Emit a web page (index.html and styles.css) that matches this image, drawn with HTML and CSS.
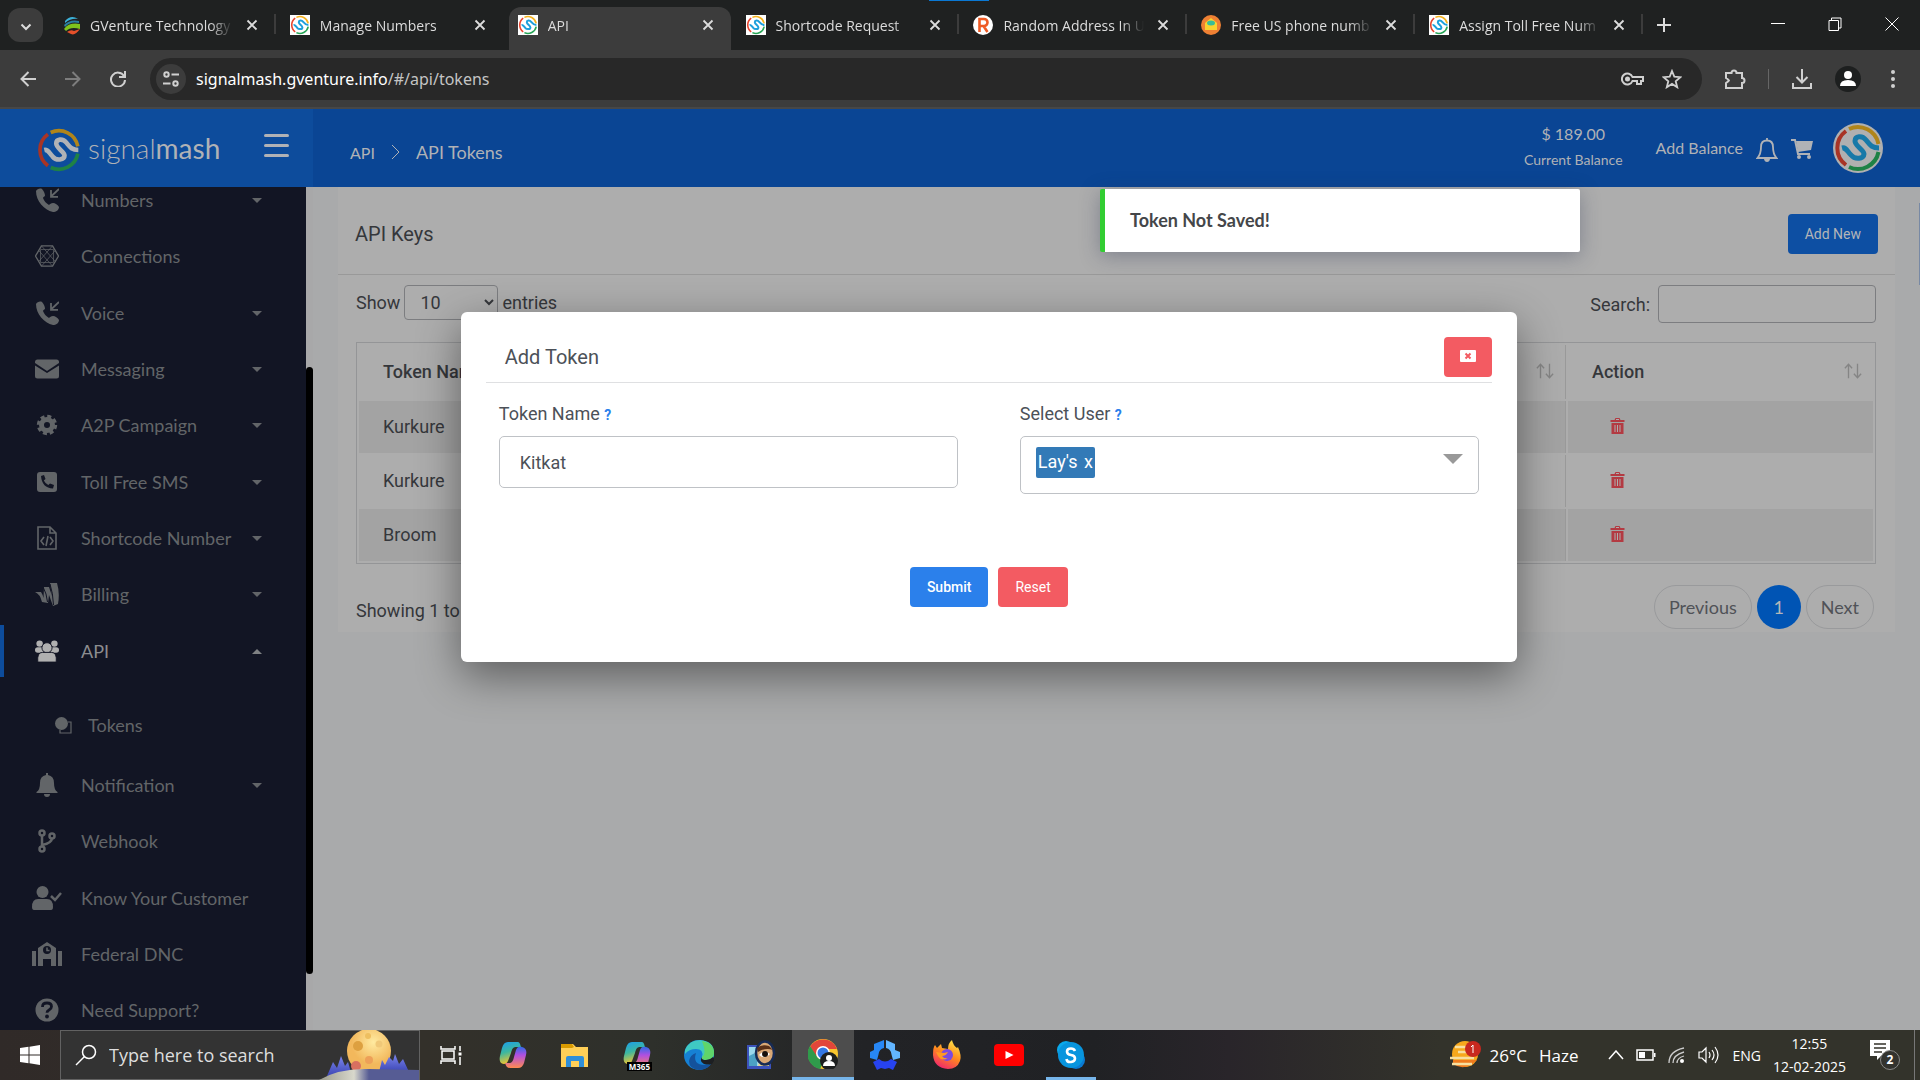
FILE: index.html
```html
<!DOCTYPE html>
<html lang="en">
<head>
<meta charset="utf-8">
<title>API</title>
<link rel="stylesheet" href="styles.css">
</head>
<body>
<svg class="defs" aria-hidden="true">
  <symbol id="rings" viewBox="0 0 50 50">
    <g fill="none" stroke-width="4">
      <path class="ring-red" d="M13 42A21 21 0 0 1 13 8"/>
      <path class="ring-yellow" d="M16 6A21 21 0 0 1 45.500 21"/>
      <path class="ring-green" d="M45.500 29A21 21 0 0 1 16 44"/>
      <path d="M9 25C13 24 14 28 18 32C22 37 31 36 31 31C31 27 22 23 22 18C22 13 29 12 33 17C37 22 39 25 46 25" stroke="currentColor" stroke-width="5"/>
    </g>
  </symbol>
  <symbol id="close" viewBox="0 0 12 12"><path d="M1.500 1.500l9 9M10.500 1.500l-9 9" stroke="currentColor" stroke-width="1.800"/></symbol>
  <symbol id="call" viewBox="0 0 24 24">
    <path fill="currentColor" d="M1 3C2 1 5 0 7 1C9 3 10 6 10 8C9 9 8 9 8 10C9 13 11 15 14 17C15 16 16 15 18 15C20 15 23 17 24 19C24 22 21 24 18 24C9 22 1 13 1 3z"/>
    <path d="M24 1l-8 7.500M16 2v6.800h7" fill="none" stroke="currentColor" stroke-width="1.800"/>
  </symbol>
  <symbol id="trash" viewBox="0 0 14 16">
    <path fill="currentColor" d="M0 2h4l1-2h4l1 2h4v2H0zM1 5h12v11H1z"/>
    <path d="M5.500 1.500h3M4.500 7v7M7 7v7M9.500 7v7" stroke="#adadad"/>
  </symbol>
  <symbol id="sort" viewBox="0 0 20 18"><path d="M5 17V2M1 6l4-4.500L9 6M15 1v15M11 12l4 4.500L19 12" fill="none" stroke="currentColor" stroke-width="1.500"/></symbol>
  <linearGradient id="cool" x2=".3" y2="1"><stop stop-color="#1a9df0"/><stop offset=".5" stop-color="#3cb7a0"/><stop offset="1" stop-color="#f5c52c"/></linearGradient>
  <linearGradient id="warm" x2="0" y2="1"><stop stop-color="#2d6be8"/><stop offset=".4" stop-color="#b04fe0"/><stop offset="1" stop-color="#ff8a50"/></linearGradient>
  <symbol id="copilot" viewBox="0 0 30 30">
    <path d="M10 2h9c3 0 3 2 4 5h-5c-3 0-4 2-5 6l-3 8c-1 2-2 3-4 3c-4 0-5-4-4-8l2-8c1-4 3-6 6-6z" fill="url(#cool)"/>
    <path d="M20 28h-8c-3 0-4-2-5-5h4c3 0 4-2 5-6l2-7c1-3 3-4 6-3c4 1 5 4 4 8l-2 8c-1 3-3 5-6 5z" fill="url(#warm)"/>
  </symbol>
</svg>

<div class="tabstrip">
  <button class="tab-search" aria-label="Search tabs"><svg width="12" height="8" viewBox="0 0 12 8"><path d="M1.500 1.500L6 6l4.500-4.500" fill="none" stroke="currentColor" stroke-width="2"/></svg></button>
  <div class="tabs">
    <div class="tab"><svg class="favicon" viewBox="0 0 20 20"><path d="M3 6Q9-1 16 4Q9 3 3 8z" fill="#3cb1d8"/><path d="M2 10Q8 4 17 6v2Q8 6 3 12z" fill="#2a7fa0"/><path d="M2 14Q7 7 18 9v5Q9 11 4 16z" fill="#7fc31c"/><path d="M5 17Q9 14 12 16l6-2Q13 21 9 19z" fill="#e5502a"/></svg><span class="title">GVenture Technology</span><button class="close" aria-label="Close tab"><svg><use href="#close"/></svg></button></div>
    <div class="tab"><svg class="favicon white"><use href="#rings"/></svg><span class="title">Manage Numbers</span><button class="close" aria-label="Close tab"><svg><use href="#close"/></svg></button></div>
    <div class="tab active"><svg class="favicon white"><use href="#rings"/></svg><span class="title">API</span><button class="close" aria-label="Close tab"><svg><use href="#close"/></svg></button></div>
    <div class="tab"><svg class="favicon white"><use href="#rings"/></svg><span class="title">Shortcode Request</span><button class="close" aria-label="Close tab"><svg><use href="#close"/></svg></button></div>
    <div class="tab"><svg class="favicon" viewBox="0 0 20 20"><circle cx="10" cy="10" r="10" fill="#fff"/><path d="M6.500 17V4H11a3.500 3.500 0 0 1 0 7H7M10.500 11l4 6" fill="none" stroke="#ee5a24" stroke-width="2.600"/></svg><span class="title">Random Address In U</span><button class="close" aria-label="Close tab"><svg><use href="#close"/></svg></button></div>
    <div class="tab"><svg class="favicon" viewBox="0 0 20 20"><circle cx="10" cy="10" r="10" fill="#ee8033"/><path d="M4 8l6-5 6 5v7H4z" fill="#f9d22e"/><ellipse cx="10" cy="8" rx="4" ry="2.500" fill="#38bd98"/></svg><span class="title">Free US phone numb</span><button class="close" aria-label="Close tab"><svg><use href="#close"/></svg></button></div>
    <div class="tab"><svg class="favicon white"><use href="#rings"/></svg><span class="title">Assign Toll Free Num</span><button class="close" aria-label="Close tab"><svg><use href="#close"/></svg></button></div>
  </div>
  <button class="new-tab" aria-label="New tab"><svg width="14" height="14" viewBox="0 0 14 14"><path d="M7 0v14M0 7h14" stroke="currentColor" stroke-width="2"/></svg></button>
  <div class="window-buttons">
    <button aria-label="Minimize"><svg viewBox="0 0 14 14"><path d="M0 6.500h14" stroke="#fff"/></svg></button>
    <button aria-label="Restore"><svg viewBox="0 0 14 14"><path d="M1 3.500h9.500v10H1zM3.500 3V1h9.500v10h-2" fill="none" stroke="#fff"/></svg></button>
    <button aria-label="Close"><svg viewBox="0 0 14 14"><path d="M.5.500l13 13M13.500.500l-13 13" stroke="#fff"/></svg></button>
  </div>
  <div class="loading"></div>
</div>

<div class="toolbar">
  <div class="nav-buttons">
    <button aria-label="Back"><svg viewBox="0 0 16 16"><path d="M16 8H2M8.500 1L1.500 8l7 7" fill="none" stroke="currentColor" stroke-width="2"/></svg></button>
    <button class="off" aria-label="Forward"><svg viewBox="0 0 16 16"><path d="M0 8h14M7.500 1l7 7-7 7" fill="none" stroke="currentColor" stroke-width="2"/></svg></button>
    <button aria-label="Reload"><svg viewBox="0 0 16 16"><path d="M14 5A7 7 0 1 0 15 9M15 0v6H9" fill="none" stroke="currentColor" stroke-width="2"/></svg></button>
  </div>
  <div class="omnibox">
    <span class="site-info"><svg width="16" height="16" viewBox="0 0 16 16" fill="none" stroke="currentColor" stroke-width="2"><circle cx="3.500" cy="3.500" r="2.200"/><path d="M8.500 3.500H16M0 12.500h7.500"/><circle cx="12.500" cy="12.500" r="2.200"/></svg></span>
    <span class="url">signalmash.gventure.info<span>/#/api/tokens</span></span>
    <svg width="23" height="14" viewBox="0 0 23 14" fill="none" stroke="currentColor" stroke-width="2"><path d="M11.500 5A5.500 5.500 0 1 0 11.500 9H16v3h4V9h2V5z"/><circle cx="6.500" cy="7" r="1.500" fill="currentColor"/></svg>
    <svg width="20" height="20" viewBox="0 0 20 20"><path d="M10 2l2.300 5.700 6 .5-4.600 4 1.500 6L10 14.900l-5.200 3.300 1.500-6-4.600-4 6-.5z" fill="none" stroke="currentColor" stroke-width="1.800"/></svg>
  </div>
  <div class="actions">
    <svg width="22" height="22" viewBox="0 0 22 22"><path d="M2 5h5.500a2.500 2.500 0 0 1 5 0H18v5a2.500 2.500 0 0 1 0 5v5H2v-5q3-2 3-2.500T2 10z" fill="none" stroke="currentColor" stroke-width="2"/></svg>
    <i></i>
    <svg width="22" height="22" viewBox="0 0 22 22"><path d="M11 1v13M5.500 9l5.500 5.500L16.500 9M2 15v5h18v-5" fill="none" stroke="currentColor" stroke-width="2"/></svg>
    <svg width="26" height="26" viewBox="0 0 26 26"><circle cx="13" cy="13" r="13" fill="#1d1f1f"/><circle cx="13" cy="9" r="4" fill="#fff"/><path d="M5 20q0-6 8-6t8 6z" fill="#fff"/></svg>
    <svg width="6" height="20" viewBox="0 0 6 20" fill="currentColor"><circle cx="3" cy="3" r="2"/><circle cx="3" cy="10" r="2"/><circle cx="3" cy="17" r="2"/></svg>
  </div>
</div>

<div class="page">
  <header class="header">
    <div class="brand">
      <svg class="brand-mark"><use href="#rings"/></svg>
      <span class="brand-name">signal<b>mash</b></span>
      <button class="menu" aria-label="Toggle menu"><i></i><i></i><i></i></button>
    </div>
    <nav class="crumbs"><a href="#">API</a><svg width="9" height="16" viewBox="0 0 9 16"><path d="M1 1l7 7-7 7" fill="none" stroke="currentColor"/></svg><a href="#" class="current">API Tokens</a></nav>
    <div class="account">
      <div class="balance"><span>$ 189.00</span><small>Current Balance</small></div>
      <a href="#" class="add-balance">Add Balance</a>
      <svg class="bell" width="22" height="26" viewBox="0 0 22 26"><path d="M11 1v2M1.500 21Q5 17 5 10Q5 3.500 11 3.500T17 10Q17 17 20.500 21z" fill="none" stroke="currentColor" stroke-width="1.800"/><path d="M8 22h6q-.5 3-3 3t-3-3z" fill="currentColor"/></svg>
      <svg class="cart" width="22" height="20" viewBox="0 0 22 20"><path d="M0 1h4l3 14h12" fill="none" stroke="currentColor" stroke-width="2"/><path d="M5 2h17l-2 9L7 13z" fill="currentColor"/><circle cx="8" cy="18" r="2" fill="currentColor"/><circle cx="18" cy="18" r="2" fill="currentColor"/></svg>
      <svg class="avatar"><use href="#rings"/></svg>
    </div>
  </header>

  <div class="body">
    <nav class="sidebar">
      <ul>
        <li><a href="#"><svg><use href="#call"/></svg>Numbers<i></i></a></li>
        <li><a href="#"><svg viewBox="0 0 26 24" fill="none" stroke="currentColor"><path d="M7 1h12l6.500 11L19 23H7L.5 12z" stroke-width="1.500"/><path d="M7 1l15 17M19 1L4 18M7 23L22 6M19 23L4 6M6 5h14M6 19h14M6 5v14M20 5v14" stroke-width=".8"/></svg>Connections</a></li>
        <li><a href="#"><svg><use href="#call"/></svg>Voice<i></i></a></li>
        <li><a href="#"><svg viewBox="0 0 24 24" fill="currentColor"><path d="M0 5q0-2.500 2.500-2.500h19Q24 2.500 24 5v1l-12 8L0 6z"/><path d="M0 8.500l12 7.500 12-7.500V19q0 2.500-2.500 2.500h-19Q0 21.500 0 19z"/></svg>Messaging<i></i></a></li>
        <li><a href="#"><svg viewBox="0 0 24 24" fill="none" stroke="currentColor"><circle cx="12" cy="12" r="5.500" stroke-width="5"/><circle cx="12" cy="12" r="8.700" stroke-width="3" stroke-dasharray="4 2.830"/></svg>A2P Campaign<i></i></a></li>
        <li><a href="#"><svg viewBox="0 0 24 24"><rect x="2" y="2" width="20" height="20" rx="3" fill="currentColor"/><path d="M6 6l3-1 1.500 4-1.700 1.500q1.500 3 4.500 4.500L15 13.500l4 1.500-1 3.500Q7 18 6 6z" fill="#121524"/></svg>Toll Free SMS<i></i></a></li>
        <li><a href="#"><svg viewBox="0 0 24 24" fill="none" stroke="currentColor" stroke-width="1.600"><path d="M3 1h12l6 6v16H3zM15 1v6h6M9 11l-3 4 3 4M15 11l3 4-3 4M13 10l-2 10"/></svg>Shortcode Number<i></i></a></li>
        <li><a href="#"><svg viewBox="0 0 24 24" fill="currentColor"><path d="M0 10h6q2 3 2.500 6L9 5h5l3 9L15 1h7q3 10 1 21l-5 2-4-11-1 8-6-1Q5 12 0 10z"/><path d="M8.500 6q3 5 4 14M15 2q3 9 3.500 21" stroke="#121524" fill="none"/></svg>Billing<i></i></a></li>
        <li class="open"><a href="#"><svg viewBox="0 0 26 24" fill="currentColor"><circle cx="5" cy="4" r="3.500"/><circle cx="21" cy="4" r="3.500"/><rect y="8" width="10" height="6" rx="3"/><rect x="16" y="8" width="10" height="6" rx="3"/><g stroke="#121524"><circle cx="13" cy="8.500" r="5.500"/><path d="M3 24Q2 13.500 8 13.500h10q6 0 5 10.500z"/></g></svg>API<i class="up"></i></a>
          <div class="sub"><a href="#"><svg viewBox="0 0 17 17"><circle cx="6.500" cy="6.500" r="6.500" fill="currentColor"/><path d="M13 5h3v11H5v-3" fill="none" stroke="currentColor" stroke-width="1.200"/></svg>Tokens</a></div></li>
        <li><a href="#"><svg viewBox="0 0 24 24" fill="currentColor"><path d="M11 0h2v2q6 1 6 8t3.500 9v1h-21v-1Q5 17 5 10t6-8zM9 21h6q0 3-3 3t-3-3z"/></svg>Notification<i></i></a></li>
        <li><a href="#"><svg viewBox="0 0 24 24" fill="none" stroke="currentColor" stroke-width="2.500"><circle cx="7" cy="4" r="2.500"/><circle cx="17" cy="7" r="2.500"/><circle cx="7" cy="20" r="2.500"/><path d="M7 6v12M17 9q0 5-10 7"/></svg>Webhook</a></li>
        <li><a href="#"><svg class="wide" viewBox="0 0 30 24"><circle cx="10.500" cy="6" r="6" fill="currentColor"/><path d="M0 21q0-8 6-8h9q6 0 6 8 0 3-2 3H2q-2 0-2-3z" fill="currentColor"/><path d="M19 10l4 4 6-7" fill="none" stroke="currentColor" stroke-width="2.500"/></svg>Know Your Customer</a></li>
        <li><a href="#"><svg class="wide" viewBox="0 0 30 24"><path d="M0 9h4v15H0zM26 9h4v15h-4zM6 6l9-6 9 6v18h-5v-7h-8v7H6z" fill="currentColor"/><circle cx="15" cy="8" r="4" fill="#121524"/><path d="M15 5.500V8.500h2.500" fill="none" stroke="currentColor" stroke-width="1.500"/></svg>Federal DNC</a></li>
        <li><a href="#"><svg viewBox="0 0 24 24"><circle cx="12" cy="12" r="11.500" fill="currentColor"/><path d="M7.500 9q0-4 4.500-4t4.500 3.500q0 2-2.500 3.500-2 1-2 2.800" fill="none" stroke="#121524" stroke-width="2.800"/><circle cx="12" cy="18.500" r="1.900" fill="#121524"/></svg>Need Support?</a></li>
      </ul>
    </nav>
    <div class="scroll"><div></div></div>

    <main>
      <section class="card">
        <div class="card-head"><h1>API Keys</h1><button class="btn dim">Add New</button></div>
        <div class="filters">
          <label>Show <select><option>10</option></select> entries</label>
          <label>Search: <input type="search"></label>
        </div>
        <table>
          <colgroup><col class="c-name"><col><col class="c-action"></colgroup>
          <thead><tr><th>Token Name</th><th><svg class="sort"><use href="#sort"/></svg></th><th>Action<svg class="sort"><use href="#sort"/></svg></th></tr></thead>
          <tbody>
            <tr><td>Kurkure</td><td></td><td><button class="delete" aria-label="Delete"><svg><use href="#trash"/></svg></button></td></tr>
            <tr><td>Kurkure</td><td></td><td><button class="delete" aria-label="Delete"><svg><use href="#trash"/></svg></button></td></tr>
            <tr><td>Broom</td><td></td><td><button class="delete" aria-label="Delete"><svg><use href="#trash"/></svg></button></td></tr>
          </tbody>
        </table>
        <div class="table-foot">
          <span>Showing 1 to 3</span>
          <div class="pager"><button>Previous</button><button class="on">1</button><button>Next</button></div>
        </div>
      </section>
    </main>
  </div>

  <div class="edge"></div>

  <form class="modal" role="dialog" aria-labelledby="modal-title">
    <div class="modal-head">
      <h2 id="modal-title">Add Token</h2>
      <button type="button" class="btn red square" aria-label="Close"><svg width="16" height="12" viewBox="0 0 16 12"><rect width="16" height="12" rx="1" fill="#fff"/><path d="M5.500 3.500l5 5M10.500 3.500l-5 5" stroke="#f35b62" stroke-width="2"/></svg></button>
    </div>
    <div class="fields">
      <div><label for="token">Token Name <b>?</b></label><input id="token" value="Kitkat"></div>
      <div><label for="user">Select User <b>?</b></label><button type="button" id="user" class="picker"><span class="chip">Lay's <span>x</span></span><i></i></button></div>
    </div>
    <div class="modal-actions"><button type="button" class="btn">Submit</button><button type="reset" class="btn red">Reset</button></div>
  </form>

  <div class="toast" role="status">Token Not Saved!</div>
</div>

<div class="taskbar">
  <button class="start" aria-label="Start"><svg width="20" height="20" viewBox="0 0 20 20" fill="#fff"><path d="M0 3l8.500-1.200v7.700H0zM9.500 1.700L20 0v9.500H9.500zM0 10.500h8.500v7.700L0 17zM9.500 10.500H20V20L9.500 18.300z"/></svg></button>
  <div class="search">
    <svg width="22" height="22" viewBox="0 0 22 22"><circle cx="14" cy="8" r="6.500" fill="none" stroke="#fff" stroke-width="1.500"/><path d="M9.500 12.500L1 21" stroke="#fff" stroke-width="1.500"/></svg>
    <input aria-label="Search" placeholder="Type here to search">
    <svg class="moon" width="100" height="50" viewBox="0 0 100 50">
      <defs><radialGradient id="moon" cx=".6" cy=".3"><stop stop-color="#ffeaa0"/><stop offset="1" stop-color="#f2b85c"/></radialGradient><linearGradient id="tree" x2="0" y2="1"><stop stop-color="#7c86ee"/><stop offset="1" stop-color="#3c46b4"/></linearGradient><linearGradient id="hill"><stop stop-color="#9a9a8c"/><stop offset=".35" stop-color="#d8d8cc"/><stop offset=".5" stop-color="#565c94"/></linearGradient></defs>
      <circle cx="50" cy="21" r="22" fill="url(#moon)"/><circle cx="39" cy="16" r="5" fill="#dda040"/><circle cx="60" cy="14" r="3.500" fill="#f0c878"/><circle cx="50" cy="30" r="4" fill="#eda058"/><circle cx="49" cy="6" r="3" fill="#eebf60"/><circle cx="37" cy="36" r="5" fill="#d87060"/>
      <path d="M8 46l6-14 4 6 4-12 4 10 3-4 4 14z" fill="url(#tree)"/><path d="M60 42l3-12 3 5 4-8 4 4 2-7 4 10 4-5 6 13z" fill="url(#tree)"/>
      <path d="M0 50Q20 38 50 39l50 1v10z" fill="url(#hill)"/>
    </svg>
  </div>
  <div class="apps">
    <button aria-label="Task view"><svg viewBox="0 0 30 30" fill="none" stroke="#fff" stroke-width="1.500"><path d="M5 6v3h14V6M5 24v-3h14v3M6 11h12v8H6zM24 6v5M24 17v8"/><path d="M22.500 14h3" stroke-width="3"/></svg></button>
    <button aria-label="Copilot"><svg><use href="#copilot"/></svg></button>
    <button aria-label="Files"><svg viewBox="0 0 30 30"><path d="M1 4h12l3 3h12v20H1z" fill="#ffcf57"/><path d="M1 4h11l2 3-2 1H1z" fill="#d99a00"/><path d="M6 27V18q0-2 2-2h14q2 0 2 2v9h-5v-6h-8v6z" fill="#2f8ed8"/></svg></button>
    <button aria-label="M365" class="m365"><svg><use href="#copilot"/></svg><span>M365</span></button>
    <button aria-label="Edge"><svg viewBox="0 0 30 30"><circle cx="15" cy="15" r="15" fill="#1681d4"/><path d="M1 10Q5 0 16 0q14 1 14 13 0 7-8 7-5 0-4-3Q20 9 12 9 5 9 1 14z" fill="#3fc9c3"/><path d="M18 1q12 2 12 12 0 7-8 7-5 0-4-3 5-3 0-16z" fill="#5fd56a"/><path d="M12 13q-4 12 9 12 4 0 7-2-5 7-13 7-10-1-10-9 1-6 7-8z" fill="#14529c"/><path d="M18 17q-1 3 4 3 4 0 7-3l2 2-3 5q-4 1-8 0-5-2-2-7z" fill="#1d1f22"/></svg></button>
    <button aria-label="Photo viewer"><svg viewBox="0 0 30 30"><path d="M1 5h24v24H1z" fill="#3c52bb"/><path d="M3 7h20v19H3z" fill="#9bd8ec"/><path d="M3 16l8-4v14H3z" fill="#4ca1c4"/><path d="M12 26l3-12 8 6v6z" fill="#e5d08c"/><ellipse cx="19" cy="13" rx="9" ry="11.500" fill="#d9a876" stroke="#172b55" stroke-width="2.500"/><path d="M11 8q5-4 12-2l4 4q-7-3-15 2z" fill="#5a3018"/><path d="M13 15q5-6 11-1-5 6-11 1z" fill="#fff"/><circle cx="19" cy="14" r="3" fill="#17100c"/></svg></button>
    <button aria-label="Chrome" class="current"><svg viewBox="0 0 30 30"><circle cx="15" cy="15" r="15" fill="#f9c62e"/><path d="M2 8a15 15 0 0 1 27 2H15l-6 9z" fill="#e2463a"/><path d="M2 7l8 12 6 3-4 8A15 15 0 0 1 2 7z" fill="#2f9b4b"/><circle cx="15" cy="14" r="7" fill="#fff"/><circle cx="15" cy="14" r="5.500" fill="#3578e5"/><circle cx="21" cy="22" r="9" fill="#1d1f1f"/><circle cx="21" cy="19" r="3" fill="#fff"/><path d="M15 27q0-5 6-5t6 5z" fill="#fff"/></svg></button>
    <button aria-label="Meetings"><svg viewBox="0 0 30 30"><path d="M14 0v8q-5 1-5.500 6.500L7 20l-7-2v-6l4-2V4z" fill="#2787f5"/><path d="M16 0l9 4v6l5 2v6l-7 2-1.500-5.500Q21 9 16 8z" fill="#62b5ff"/><path d="M3 22l6-3q6 5 12 0l6 3-4 8-4-2-4 1-4-1-4 2z" fill="#2743f0"/></svg></button>
    <button aria-label="Firefox"><svg viewBox="0 0 30 30"><defs><linearGradient id="fox" x1=".8" x2=".3" y2="1"><stop stop-color="#ffe94a"/><stop offset=".5" stop-color="#ff8a1e"/><stop offset="1" stop-color="#f0246e"/></linearGradient></defs><path d="M1 15Q1 7 3 5l2 3 4-4 1 4 6 1q0-6 4-9 1 5 5 8l1-1q4 9 2 14-3 8-12 8Q2 28 1 15z" fill="url(#fox)"/><circle cx="15" cy="15" r="6" fill="#7a4ae0"/><path d="M4 12l8 1 4-1q-2 4-6 4 2 3 6 2-6 4-10-2z" fill="#ff9a22"/></svg></button>
    <button aria-label="YouTube"><svg viewBox="0 0 30 30"><rect y="4" width="30" height="22" rx="4" fill="#f00"/><path d="M11.500 11l8 4-8 4z" fill="#fff"/></svg></button>
    <button aria-label="Skype" class="running"><svg viewBox="0 0 30 30"><circle cx="10" cy="10" r="9" fill="#0aa9ec"/><circle cx="20" cy="20" r="9" fill="#0a7ad2"/><circle cx="15" cy="15" r="13" fill="#0895de"/><path d="M19 11q-1-2.500-4-2.500-4 0-4 3t4 3.500 4 3.500-4 3.500-4.500-3" fill="none" stroke="#fff" stroke-width="2.600"/></svg></button>
  </div>
  <div class="tray">
    <svg class="weather" width="32" height="30" viewBox="0 0 32 30"><circle cx="15" cy="14" r="13" fill="#f7a81c"/><path d="M3 24q12 8 24-4H3z" fill="#ef7a1d"/><path d="M5 7h12M8 12h12M0 18h24M2 24h20" stroke="#f7dfa0" stroke-width="2.500"/><circle cx="23" cy="9" r="8" fill="#c8281f"/><path d="M21 7l2-2v8" fill="none" stroke="#fff"/></svg>
    <span class="big">26°C</span><span class="big haze">Haze</span>
    <svg width="16" height="10" viewBox="0 0 16 10"><path d="M1 9l7-8 7 8" fill="none" stroke="#fff" stroke-width="1.500"/></svg>
    <svg width="20" height="12" viewBox="0 0 20 12"><path d="M1 1h16v10H1z" fill="none" stroke="#fff" stroke-width="1.500"/><path d="M3 3h6v6H3zM18 4h1.500v4H18z" fill="#fff"/></svg>
    <svg width="18" height="18" viewBox="0 0 18 18" fill="none" stroke="#ccc" stroke-width="1.300"><path d="M1 17Q1 5 16 2M5 17Q5 9 16 6M9 17Q9 12 16 10"/><circle cx="14" cy="15" r="2" fill="#fff" stroke="none"/></svg>
    <svg width="22" height="18" viewBox="0 0 22 18" fill="none" stroke="#fff" stroke-width="1.200"><path d="M1 6h3l4-4v14l-4-4H1zM11 6q2 3 0 6M14 4q4 5 0 10M17 1q6 8 0 16"/></svg>
    <span class="lang">ENG</span>
    <div class="clock"><span>12:55</span><span>12-02-2025</span></div>
    <div class="notices"><svg width="20" height="20" viewBox="0 0 20 20"><path d="M0 0h20v16h-9l-4 4v-4H0z" fill="#fff"/><path d="M4 4h12M4 8h12M4 12h8" stroke="#33322a" stroke-width="1.500"/></svg><b>2</b></div>
    <i class="peek"></i>
  </div>
</div>
</body>
</html>
```
FILE: styles.css
```css
* { box-sizing: border-box; }
body {
  margin: 0;
  height: 100vh;
  display: flex;
  flex-direction: column;
  overflow: hidden;
  font-family: "Roboto", "Liberation Sans", sans-serif;
  font-size: 18px;
  color: #35373b;
}
button {
  font: inherit;
  color: inherit;
  border: 0;
  padding: 0;
  background: none;
}
a { color: inherit; text-decoration: none; }
h1, h2 { margin: 0; font-size: 20px; font-weight: 400; }
svg { flex: none; }
.defs { position: absolute; width: 0; height: 0; }
.ring-red { stroke: var(--red, #e8452f); }
.ring-yellow { stroke: var(--yellow, #f5b21c); }
.ring-green { stroke: var(--green, #26a556); }

/* Browser tabs */
.tabstrip {
  position: relative;
  height: 50px;
  flex: none;
  display: flex;
  align-items: center;
  padding: 0 0 0 8px;
  background: #1f2121;
  color: #dcdcdc;
  font-family: "Open Sans", sans-serif;
  font-size: 14px;
}
.tab-search {
  width: 35px;
  height: 34px;
  border-radius: 12px;
  background: #3c3c3c;
}
.tabs { flex: 1; height: 50px; display: flex; margin-left: 5px; }
.tab {
  position: relative;
  flex: 1 1 0;
  min-width: 0;
  display: flex;
  align-items: center;
  padding: 0 18px 0 14px;
}
.tab::after {
  content: "";
  position: absolute;
  right: 0;
  top: 14px;
  width: 2px;
  height: 20px;
  background: #3c3c3c;
}
.tab.active::after, .tab:nth-child(2)::after { display: none; }
.tab.active::before {
  content: "";
  position: absolute;
  inset: 7px 1px 0 5px;
  border-radius: 12px 12px 0 0;
  background: #3c3c3c;
}
.tab.active > * { position: relative; }
.favicon { width: 20px; height: 20px; margin-right: 10px; }
.tab:first-child .favicon { margin-right: 8px; }
.favicon.white { background: #fff; color: #1ea0dc; }
.title {
  flex: 1;
  overflow: hidden;
  white-space: nowrap;
  margin-right: 10px;
  -webkit-mask-image: linear-gradient(90deg, #000 82%, transparent 98%);
  mask-image: linear-gradient(90deg, #000 82%, transparent 98%);
}
.close { display: flex; }
.close svg { width: 12px; height: 12px; }
.new-tab { margin-left: 14px; display: flex; }
.window-buttons { display: flex; margin-left: 78px; }
.window-buttons button { width: 57px; height: 50px; }
.window-buttons svg { width: 14px; height: 14px; }
.loading {
  position: absolute;
  left: 929px;
  top: 0;
  width: 60px;
  height: 1px;
  background: #0a78d4;
}

/* Address bar */
.toolbar {
  height: 59px;
  flex: none;
  display: flex;
  align-items: center;
  padding: 0 24px 0 20px;
  background: #3c3c3c;
  border-bottom: 2px solid #474747;
  color: #d0d0d0;
}
.nav-buttons { display: flex; gap: 29px; width: 130px; }
.nav-buttons button { display: flex; }
.nav-buttons svg { width: 16px; height: 16px; }
.nav-buttons .off { color: #7d7d7d; }
.omnibox {
  flex: 1;
  height: 42px;
  display: flex;
  align-items: center;
  gap: 18px;
  padding: 0 20px 0 6px;
  border-radius: 21px;
  background: #282828;
}
.site-info {
  width: 30px;
  height: 30px;
  display: grid;
  place-items: center;
  border-radius: 50%;
  background: #3c3c3c;
}
.url {
  flex: 1;
  margin-left: -8px;
  font-family: "Noto Sans", sans-serif;
  font-size: 16px;
  color: #fff;
}
.url span { color: #c4c4c4; }
.actions { display: flex; align-items: center; gap: 22px; margin-left: 22px; }
.actions i { width: 1px; height: 20px; background: #666; }
.actions svg:last-child { margin-left: 7px; }

/* Application header */
.page {
  --red: #a83425;
  --yellow: #b0851a;
  --green: #1f8245;
  position: relative;
  flex: 1;
  min-height: 0;
  display: flex;
  flex-direction: column;
  background: #a9aaab;
}
.header {
  height: 78px;
  flex: none;
  display: flex;
  align-items: center;
  background: #0a4594;
  color: #b0b2b6;
  font-family: "Lato", sans-serif;
}
.brand {
  width: 313px;
  height: 78px;
  display: flex;
  align-items: center;
  padding: 0 24px 0 36px;
  background: #0d4c9c;
}
.brand-mark { width: 46px; height: 46px; margin-top: 4px; }
.brand-name { margin-left: 6px; font-size: 28px; line-height: 34px; font-weight: 300; }
.menu { margin: 0 0 6px auto; display: flex; flex-direction: column; gap: 7px; }
.menu i { width: 25px; height: 3px; border-radius: 2px; background: currentColor; }
.crumbs {
  display: flex;
  align-items: center;
  gap: 16px;
  margin: 8px auto 0 37px;
  font-size: 16px;
}
.crumbs .current { font-size: 18px; }
.account { display: flex; align-items: center; padding-right: 37px; font-size: 16px; }
.balance { display: flex; flex-direction: column; align-items: center; gap: 8px; margin-bottom: 4px; }
.balance small { font-size: 14px; }
.add-balance { margin: 0 13px 2px 33px; }
.bell { margin-top: 4px; }
.cart { margin: 2px 20px 0 13px; }
.avatar { width: 50px; height: 50px; border-radius: 50%; background: #b0b0b0; color: #1779a8; }

/* Sidebar */
.body { flex: 1; min-height: 0; display: flex; }
.sidebar {
  width: 306px;
  overflow: hidden;
  background: #121524;
  color: #626568;
  font-family: "Lato", sans-serif;
}
.sidebar ul { list-style: none; margin: -15px 0 0; padding: 0; }
.sidebar li:nth-child(3n + 2) { padding-bottom: 1px; }
.sidebar li > a {
  height: 56px;
  display: flex;
  align-items: center;
  padding: 0 44px 0 35px;
}
.sidebar li > a > svg { width: 24px; height: 24px; margin-right: 22px; }
.sidebar li > a > svg.wide { width: 30px; margin: 0 19px 0 -3px; }
.sidebar i {
  margin-left: auto;
  border: 5px solid transparent;
  border-top-color: currentColor;
  border-bottom: 0;
}
.sidebar i.up {
  border-top: 0;
  border-bottom: 5px solid #7f8183;
}
.sidebar .open > a {
  color: #8c8d90;
  height: 52px;
  margin: 2px 0;
  border-left: 4px solid #0d4c9c;
  padding-left: 31px;
}
.sidebar .open > a > svg { color: #b0b0b0; }
.sub { padding: 18px 0 4px; }
.sub a { height: 56px; display: flex; align-items: center; padding-left: 55px; }
.sub svg { width: 17px; height: 17px; margin-right: 16px; }
.scroll { width: 7px; padding-top: 180px; background: #a8a8a9; }
.scroll div { height: 607px; border-radius: 4px; background: #000; }

/* Token list */
main { flex: 1; min-width: 0; padding: 0 25px; }
.card { background: #adadad; padding-bottom: 3px; }
.card-head {
  height: 88px;
  display: flex;
  align-items: center;
  justify-content: space-between;
  padding: 6px 17px 0;
  border-bottom: 1px solid #999;
}
.btn {
  height: 40px;
  padding: 0 17px;
  border-radius: 4px;
  background: #2b80eb;
  color: #fff;
  font-size: 14px;
  font-weight: 500;
}
.btn.dim { background: #0d4fa3; color: #b3b5b8; font-weight: 400; }
.btn.red { background: #f35b62; font-weight: 400; }
.filters {
  display: flex;
  justify-content: space-between;
  align-items: flex-start;
  padding: 10px 19px 0 18px;
}
.filters label { display: flex; align-items: center; gap: 4px; }
.filters label:last-child { gap: 8px; }
.filters select, .filters input {
  border: 1px solid #7c7d80;
  border-radius: 4px;
  background: transparent;
  font: inherit;
  color: inherit;
}
.filters select { width: 94px; height: 35px; padding-left: 11px; }
.filters input { width: 218px; height: 38px; }
table {
  width: calc(100% - 37px);
  margin: 19px 19px 0 18px;
  table-layout: fixed;
  border: 1px solid #949597;
  border-collapse: separate;
  border-spacing: 2px;
}
.c-name { width: 400px; }
.c-action { width: 305px; }
th, td { height: 52px; padding: 0 24px 2px; text-align: left; }
th { position: relative; height: 54px; font-weight: 500; }
th:not(:last-child), td:not(:last-child) { border-right: 1px solid #999; }
tbody tr:nth-child(odd) td { background: #a3a3a3; }
.sort { position: absolute; right: 11px; top: 17px; width: 18px; height: 18px; color: #858585; }
.delete { display: flex; margin-left: 18px; color: #b33a42; }
.delete svg { width: 15px; height: 16px; }
.table-foot {
  display: flex;
  justify-content: space-between;
  align-items: flex-end;
  padding: 21px 21px 0 18px;
}
.table-foot > span { line-height: 36px; }
.pager { display: flex; gap: 5px; font-family: "Lato", sans-serif; color: #505257; }
.pager button { height: 44px; padding: 0 14px; border: 1px solid #999a9c; border-radius: 22px; }
.pager .on { width: 44px; padding: 0; border: 0; background: #0054b4; color: #b4b6b8; }
.edge {
  position: absolute;
  right: 0;
  top: 94px;
  width: 1px;
  height: 82px;
  background: #7889a4;
}

/* Dialog and message */
.modal {
  position: absolute;
  left: 24%;
  top: 203px;
  width: 55%;
  padding: 25px 25px 55px;
  border-radius: 6px;
  background: #fff;
  color: #4c5158;
  box-shadow: 0 14px 44px rgba(0, 0, 0, .45);
}
.modal-head {
  height: 46px;
  display: flex;
  align-items: flex-start;
  justify-content: space-between;
  padding-left: 19px;
  border-bottom: 1px solid #dfe0e2;
}
.modal-head h2 { line-height: 40px; }
.btn.square { width: 48px; padding: 0; }
.fields {
  display: grid;
  grid-template-columns: 1fr 1fr;
  gap: 62px;
  padding: 19px 13px 0;
}
.fields label { display: block; line-height: 24px; margin-bottom: 9px; }
.fields label b { font-size: 14px; font-weight: 700; color: #2b80eb; }
.fields input, .picker {
  display: flex;
  width: 100%;
  height: 52px;
  border: 1px solid #bfc2c6;
  border-radius: 5px;
  background: #fff;
  font: inherit;
  color: inherit;
}
.fields input { padding: 0 20px; }
.picker { height: 58px; align-items: flex-start; justify-content: space-between; padding: 10px 15px; }
.chip { height: 31px; padding: 0 2px; border-radius: 2px; line-height: 30px; background: #337ab7; color: #fff; }
.chip span { margin-left: 2px; }
.picker i { margin: 7px 0 0; border: 10px solid transparent; border-top-color: #999; border-bottom: 0; }
.modal-actions { display: flex; justify-content: center; gap: 10px; margin-top: 73px; }
.toast {
  position: absolute;
  right: 340px;
  top: 80px;
  width: 25%;
  height: 63px;
  padding-left: 25px;
  border-left: 5px solid #32cd32;
  border-radius: 2px;
  background: #fff;
  color: #444649;
  box-shadow: 0 4px 20px rgba(40, 50, 80, .35);
  font: 700 18px/62px "Lato", sans-serif;
}

/* Taskbar */
.taskbar {
  height: 50px;
  flex: none;
  display: flex;
  align-items: center;
  background: linear-gradient(90deg, #302a28, #33302a 22%, #2e302b 34%, #222326 45%, #202124 57%, #29252a 64%, #33332b 75%, #33332b);
  color: #fff;
  font-family: "Open Sans", sans-serif;
  font-size: 14px;
}
.start { width: 60px; display: grid; place-items: center; }
.search {
  width: 360px;
  height: 50px;
  display: flex;
  align-items: center;
  padding-left: 14px;
  border: 1px solid #626262;
  background: #333;
}
.search input {
  flex: 1;
  min-width: 0;
  padding: 0 0 0 12px;
  border: 0;
  background: none;
  color: #fff;
  font: 18px "Open Sans", sans-serif;
}
.search input::placeholder { color: #dedede; }
.apps { display: flex; }
.apps button { position: relative; width: 62px; height: 50px; display: grid; place-items: center; }
.apps svg { width: 30px; height: 30px; }
.apps .current { background: #4d4d4d; border-bottom: 3px solid #76b5ea; }
.apps .running::after {
  content: "";
  position: absolute;
  bottom: 0;
  left: 6px;
  right: 6px;
  height: 3px;
  background: #76b5ea;
}
.m365 span {
  position: absolute;
  right: 16px;
  bottom: 9px;
  padding: 0 2px;
  background: #000;
  font: 700 8px/9px "Open Sans", sans-serif;
}
.tray { display: flex; align-items: center; gap: 12px; margin-left: auto; padding-right: 5px; }
.tray .weather { margin-right: -4px; }
.big { font-size: 17px; }
.haze { margin-right: 18px; }
.clock { display: flex; flex-direction: column; align-items: center; gap: 5px; line-height: 18px; margin: 0 12px 0 0; }
.notices { position: relative; width: 32px; height: 30px; }
.notices b {
  position: absolute;
  left: 10px;
  top: 10px;
  width: 20px;
  height: 20px;
  border: 1px solid #888;
  border-radius: 50%;
  background: #33332f;
  font-size: 12px;
  line-height: 18px;
  text-align: center;
}
.peek { width: 1px; height: 50px; background: #777; }
```
